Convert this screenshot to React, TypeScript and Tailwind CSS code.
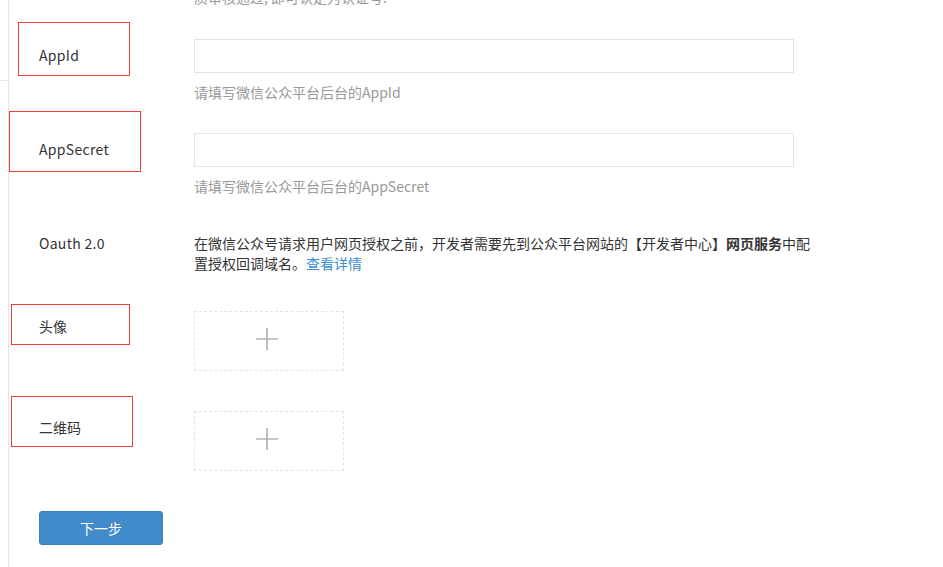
import React from "react";

const font = { fontFamily: '"Microsoft YaHei", "Noto Sans CJK SC", "Noto Sans", sans-serif' };

function Plus() {
  return (
    <svg width="24" height="24" viewBox="0 0 24 24">
      <line x1="1" y1="12" x2="23" y2="12" stroke="#b4b4b4" strokeWidth="1.5" />
      <line x1="12" y1="1" x2="12" y2="23" stroke="#a9a9b8" strokeWidth="1.5" />
    </svg>
  );
}

export default function App() {
  return (
    <div className="w-full h-[567px] overflow-hidden bg-white flex text-[14px] text-[#333]" style={font}>
      <div className="w-[9px] shrink-0 border-r border-[#e6e6e6]">
        <div className="h-[81px] border-b border-[#e6e6e6]" />
      </div>
      <div className="flex-1 flex flex-col">
        <div className="pl-[185px] -mt-[13px] leading-[20px] text-[#999]">质审核通过, 即可认定为认证号.</div>

        {/* AppId */}
        <div className="flex mt-[32px]">
          <div className="relative w-[185px] shrink-0 pl-[30px] pt-[6px] leading-[20px] tracking-[0.3px]">
            <div className="absolute left-[9px] -top-[17px] w-[112px] h-[54px] border border-[#f23b3b]" />
            AppId
          </div>
          <div className="flex flex-col">
            <div className="w-[600px] h-[34px] border border-[#e5e5e5]" />
            <div className="mt-[9px] leading-[20px] text-[#999]">请填写微信公众平台后台的AppId</div>
          </div>
        </div>

        {/* AppSecret */}
        <div className="flex mt-[31px]">
          <div className="relative w-[185px] shrink-0 pl-[30px] pt-[6px] leading-[20px] tracking-[0.3px]">
            <div className="absolute left-0 -top-[22px] w-[132px] h-[61px] border border-[#f23b3b]" />
            AppSecret
          </div>
          <div className="flex flex-col">
            <div className="w-[600px] h-[34px] border border-[#e5e5e5]" />
            <div className="mt-[9px] leading-[20px] text-[#999]">请填写微信公众平台后台的AppSecret</div>
          </div>
        </div>

        {/* Oauth */}
        <div className="flex mt-[37px]">
          <div className="w-[185px] shrink-0 pl-[30px] leading-[20px] tracking-[0.3px]">Oauth 2.0</div>
          <div className="w-[620px] leading-[20px]">
            在微信公众号请求用户网页授权之前，开发者需要先到公众平台网站的【开发者中心】<span className="font-bold">网页服务</span>中配置授权回调域名。<span className="text-[#3c8dd0]">查看详情</span>
          </div>
        </div>

        {/* 头像 */}
        <div className="flex mt-[38px]">
          <div className="relative w-[185px] shrink-0 pl-[30px] pt-[5px] leading-[20px]">
            <div className="absolute left-[2px] -top-[7px] w-[119px] h-[41px] border border-[#f23b3b]" />
            头像
          </div>
          <div className="w-[150px] h-[60px] border border-dashed border-[#e3e3e3] flex items-center justify-center pr-[4px] pb-[5px]">
            <Plus />
          </div>
        </div>

        {/* 二维码 */}
        <div className="flex mt-[40px]">
          <div className="relative w-[185px] shrink-0 pl-[30px] pt-[6px] leading-[20px]">
            <div className="absolute left-[2px] -top-[15px] w-[122px] h-[51px] border border-[#f23b3b]" />
            二维码
          </div>
          <div className="w-[150px] h-[60px] border border-dashed border-[#e3e3e3] flex items-center justify-center pr-[4px] pb-[5px]">
            <Plus />
          </div>
        </div>

        <div className="pl-[30px] mt-[40px]">
          <button className="w-[124px] h-[34px] rounded-[3px] bg-[#428bca] border border-[#3a80bd] text-white text-[14px] flex items-center justify-center">
            下一步
          </button>
        </div>
      </div>
    </div>
  );
}
